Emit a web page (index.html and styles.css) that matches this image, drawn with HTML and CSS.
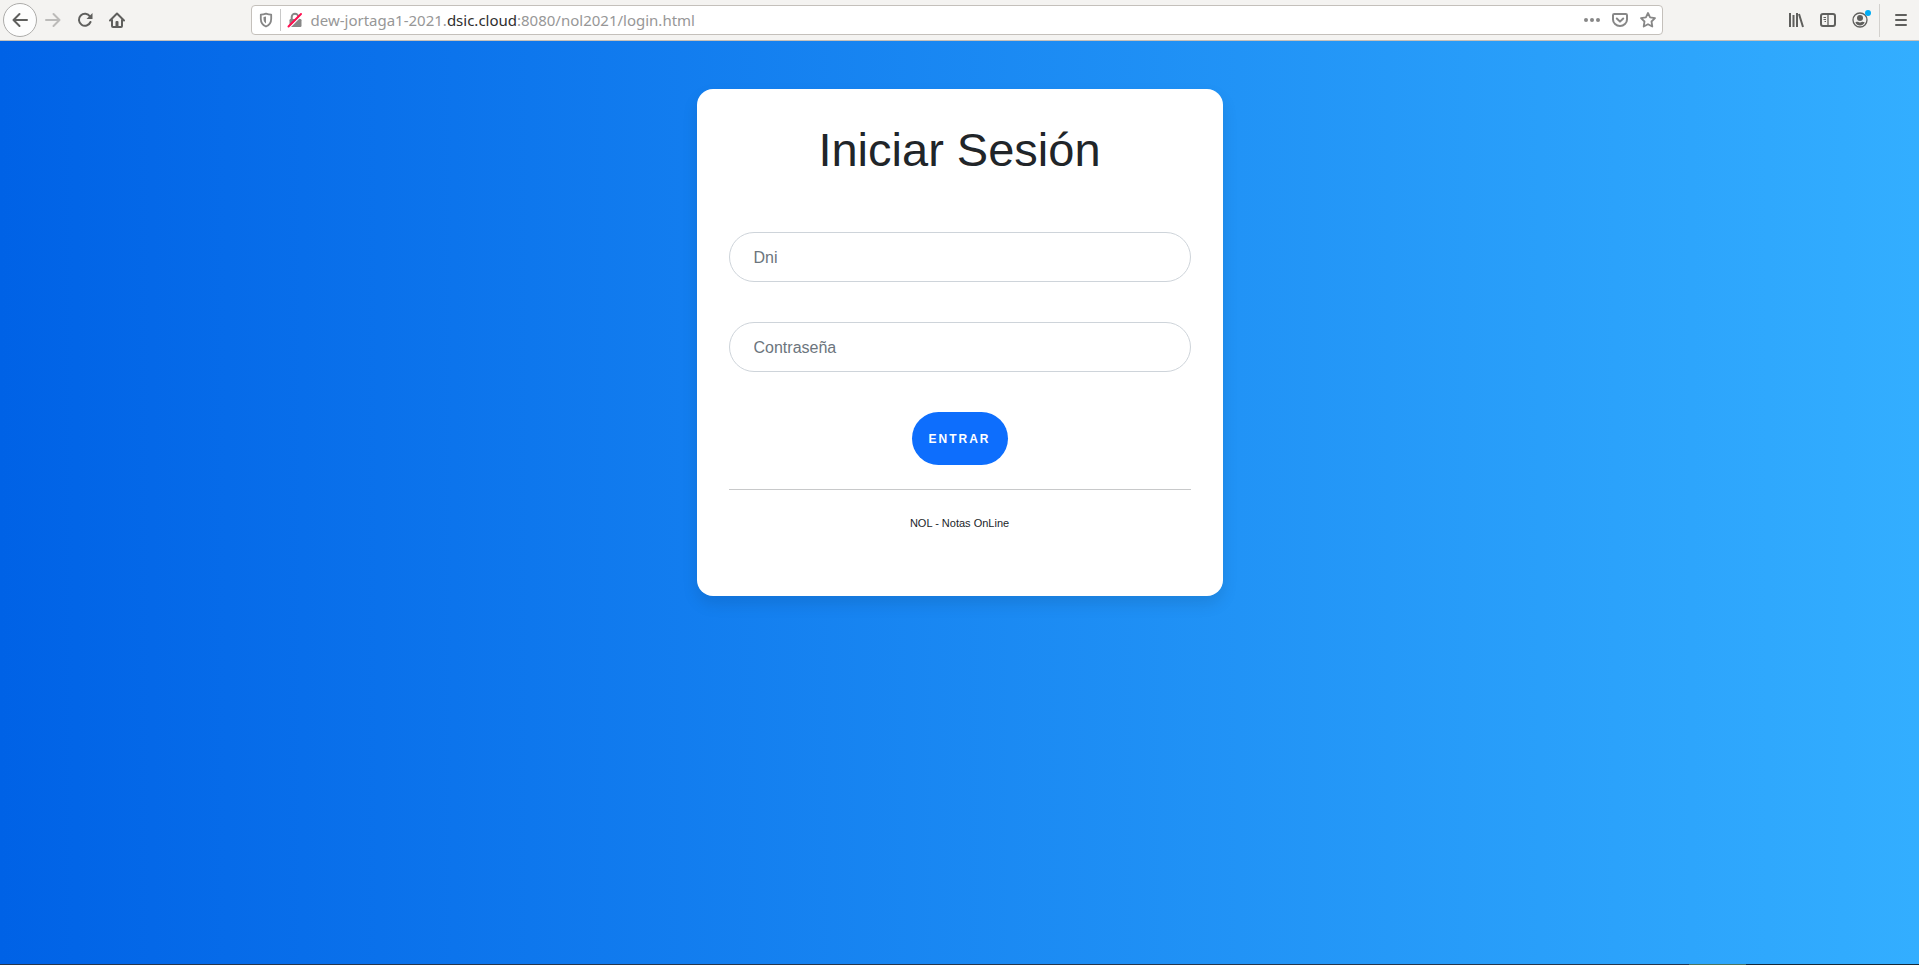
FILE: index.html
```html
<!DOCTYPE html>
<html lang="es">
<head>
<meta charset="utf-8">
<title>Iniciar Sesión</title>
<link rel="stylesheet" href="styles.css">
</head>
<body>
<header class="toolbar">
  <button class="tool tool-back" type="button" aria-label="Atrás">
    <svg class="icon" viewBox="0 0 16 16"><path d="M15 8H1.500M7.500 2L1.500 8l6 6"/></svg>
  </button>
  <button class="tool" type="button" aria-label="Adelante" disabled>
    <svg class="icon" viewBox="0 0 16 16"><path d="M1 8h13.500M8.500 2l6 6-6 6"/></svg>
  </button>
  <button class="tool" type="button" aria-label="Recargar">
    <svg class="icon" viewBox="0 0 16 16"><path d="M13 4.500A6 6 0 1 0 13.500 10"/><path class="solid" d="M15.500 1v6h-6z"/></svg>
  </button>
  <button class="tool" type="button" aria-label="Inicio">
    <svg class="icon" viewBox="0 0 16 16"><path d="M1 8.500l7-7 7 7M3 7.500V14a1 1 0 0 0 1 1h8a1 1 0 0 0 1-1V7.500"/><path class="solid" d="M6.500 15V10a1 1 0 0 1 1-1h1a1 1 0 0 1 1 1v5z"/></svg>
  </button>
  <span class="spacer"></span>
  <div class="urlbar">
    <button class="field-tool" type="button" aria-label="Protección">
      <svg class="icon" viewBox="0 0 16 16"><path class="shield" d="M8 1.700c2 .6 3.700.9 5.200 1v4.100c0 3.800-2.200 6.500-5.200 7.700-3-1.200-5.200-3.900-5.200-7.700V2.700c1.500-.1 3.200-.4 5.200-1z"/><path class="solid" d="M8 4.500v7c-1.600-1-2.500-2.700-2.500-4.700V5.100c.9-.1 1.700-.3 2.500-.6z"/></svg>
    </button>
    <span class="field-line"></span>
    <button class="field-tool field-lock" type="button" aria-label="Conexión no segura">
      <svg class="icon" viewBox="0 0 16 16"><path d="M4.700 7V5a3.300 3.300 0 0 1 6.600 0v2"/><rect class="solid" x="2.500" y="7" width="12" height="8" rx="1.200"/><path class="gap" d="M2.500 15.500L15.500 2.500"/><path class="strike" d="M1.500 14.500L14 2"/></svg>
    </button>
    <div class="address">dew-jortaga1-2021.<span class="domain">dsic.cloud</span>:8080/nol2021/login.html</div>
    <button class="field-tool" type="button" aria-label="Más acciones">
      <svg class="icon" viewBox="0 0 16 16"><g class="solid"><circle cx="2" cy="8" r="2"/><circle cx="8" cy="8" r="2"/><circle cx="14" cy="8" r="2"/></g></svg>
    </button>
    <button class="field-tool" type="button" aria-label="Guardar en Pocket">
      <svg class="icon" viewBox="0 0 16 16"><path d="M2.300 2h11.400c.8 0 1.300.5 1.300 1.300V7.500a7 6.500 0 0 1-14 0V3.300C1 2.500 1.500 2 2.300 2zM4.800 6.500L8 9.600l3.200-3.100"/></svg>
    </button>
    <button class="field-tool" type="button" aria-label="Añadir a marcadores">
      <svg class="icon" viewBox="0 0 16 16"><path class="star" d="M8 1l2.100 4.400 4.900.7-3.500 3.400.8 5L8 12.200l-4.300 2.300.8-5L1 6.100l4.900-.7z"/></svg>
    </button>
  </div>
  <span class="spacer"></span>
  <button class="tool" type="button" aria-label="Biblioteca">
    <svg class="icon" viewBox="0 0 16 16"><path class="square" d="M2 1v14M5.500 3v12M9 1v14M11 2l4 13"/></svg>
  </button>
  <button class="tool" type="button" aria-label="Barra lateral">
    <svg class="icon" viewBox="0 0 16 16"><rect x="1" y="2" width="14" height="12" rx="2"/><path class="thin" d="M8 2v12"/><path class="hair" d="M3.500 5.500h2.500M3.500 7.500h2.500M4.500 9.500h1.500"/></svg>
  </button>
  <button class="tool" type="button" aria-label="Cuenta">
    <svg class="icon" viewBox="0 0 16 16"><circle class="thin" cx="8" cy="8" r="7"/><circle class="solid" cx="8" cy="6" r="3"/><path class="solid" d="M3.300 10.500c1.200-.6 2-.7 2.600-.7 1.300.9 2.900.9 4.200 0 .6 0 1.400.1 2.600.7-1 1.900-2.700 3-4.700 3s-3.700-1.100-4.700-3z"/></svg>
    <span class="badge"></span>
  </button>
  <span class="tool-line"></span>
  <button class="tool" type="button" aria-label="Menú">
    <svg class="icon" viewBox="0 0 16 16"><path d="M3 3h10M3 8h10M3 13h10"/></svg>
  </button>
</header>
<main class="page">
  <section class="card">
    <h1 class="title">Iniciar Sesión</h1>
    <form class="form">
      <input class="input" type="text" placeholder="Dni" aria-label="Dni">
      <input class="input" type="password" placeholder="Contraseña" aria-label="Contraseña">
      <button class="submit" type="submit">ENTRAR</button>
    </form>
    <hr class="rule">
    <p class="note">NOL - Notas OnLine</p>
  </section>
</main>
<footer class="taskbar"></footer>
</body>
</html>
```
FILE: styles.css
```css
* { box-sizing: border-box; }

body {
  margin: 0;
  min-height: 100vh;
  display: flex;
  flex-direction: column;
  background: linear-gradient(to right, #0062e6, #33aeff);
  color: #212529;
  font: 16px/24px "Liberation Sans", Arial, sans-serif;
}

button { font: inherit; color: inherit; border: 0; background: none; padding: 0; }

.toolbar {
  display: flex;
  align-items: center;
  height: 41px;
  padding: 0 2px 0 3px;
  background: #f4f3f1;
  border-bottom: 1px solid #c6c1bb;
  color: #5f5f5d;
}
.tool {
  position: relative;
  display: flex;
  align-items: center;
  justify-content: center;
  width: 32px;
  height: 32px;
}
.tool:disabled { color: #bcbbb9; }
.tool-back {
  width: 34px;
  height: 34px;
  border: 1px solid #adacaa;
  border-radius: 50%;
  background: #fdfdfd;
}
.tool-line { width: 1px; height: 33px; margin: 0 5px 0 3px; background: #d3d1ce; }
.badge {
  position: absolute;
  top: 6px;
  right: 5px;
  width: 6px;
  height: 6px;
  border-radius: 50%;
  background: #00adf5;
}
.spacer { flex: 1; }

.icon {
  display: block;
  width: 16px;
  height: 16px;
  fill: none;
  stroke: currentColor;
  stroke-width: 2;
  stroke-linecap: round;
  stroke-linejoin: round;
}
.icon .solid { fill: currentColor; stroke: none; }
.icon .shield, .icon .star { stroke-width: 1.8; }
.icon .thin { stroke-width: 1.3; }
.icon .hair { stroke-width: 1; stroke-linecap: butt; }
.icon .square { stroke-linecap: butt; }
.icon .gap { stroke: #fff; stroke-width: 1.5; }
.icon .strike { stroke: #ff0f50; stroke-width: 2; }

.urlbar {
  flex: 12;
  display: flex;
  align-items: center;
  height: 30px;
  background: #fff;
  border: 1px solid #c4c0bb;
  border-radius: 4px;
  color: #878787;
}
.field-tool {
  display: flex;
  align-items: center;
  justify-content: center;
  width: 28px;
  height: 28px;
}
.field-line { width: 1px; height: 22px; background: #c8c8c8; }
.field-lock { margin: 0 2px 0 0; }
.address {
  flex: 1;
  color: #979797;
  font: 15px/28px "Noto Sans", "Open Sans", sans-serif;
  white-space: nowrap;
}
.domain { color: #2e2e2e; }

.page { flex: 1; padding: 48px 16px; }
.card {
  max-width: 526px;
  margin: 0 auto;
  padding: 32px 32px 60px;
  border-radius: 16px;
  background: #fff;
  box-shadow: 0 8px 16px rgba(0, 0, 0, 0.1);
}
.title {
  margin: 0 0 53px;
  font-size: 47px;
  line-height: 58px;
  font-weight: 400;
  text-align: center;
}
.form { display: flex; flex-direction: column; align-items: center; gap: 40px; }
.input {
  width: 100%;
  height: 50px;
  padding: 1px 24px 0;
  border: 1px solid #ced4da;
  border-radius: 25px;
  background: #fff;
  font: inherit;
  color: #495057;
}
.input::placeholder { color: #6c757d; opacity: 1; }
.submit {
  height: 53px;
  padding: 0 17px;
  border-radius: 27px;
  background: #0d6efd;
  color: #fff;
  font-size: 12px;
  font-weight: 700;
  letter-spacing: 2px;
}
.rule { height: 1px; margin: 24px 0 21px; border: 0; background: #c8c9ca; }
.note { margin: 0; font-size: 11px; line-height: 25px; text-align: center; }

.taskbar {
  height: 1px;
  background: linear-gradient(to right, #27364d 88%, #4d7460 88%, #4d7460 91%, #172838 91%);
}
```
